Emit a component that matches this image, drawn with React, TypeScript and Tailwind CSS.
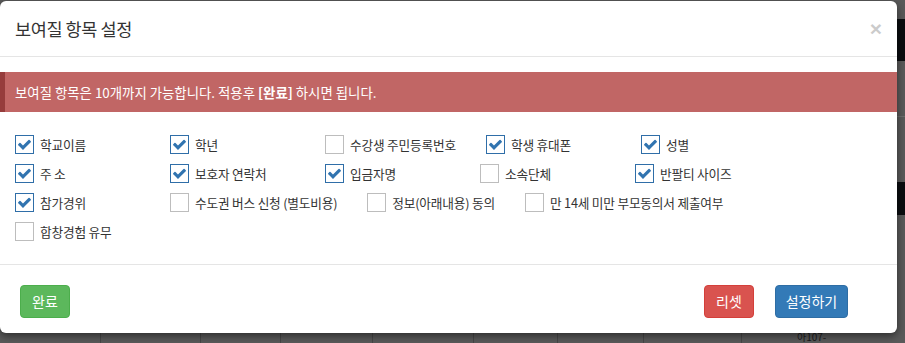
import React from "react";

const items: { label: string; checked: boolean }[] = [
  { label: "학교이름", checked: true },
  { label: "학년", checked: true },
  { label: "수강생 주민등록번호", checked: false },
  { label: "학생 휴대폰", checked: true },
  { label: "성별", checked: true },
  { label: "주 소", checked: true },
  { label: "보호자 연락처", checked: true },
  { label: "입금자명", checked: true },
  { label: "소속단체", checked: false },
  { label: "반팔티 사이즈", checked: true },
  { label: "참가경위", checked: true },
  { label: "수도권 버스 신청 (별도비용)", checked: false },
  { label: "정보(아래내용) 동의", checked: false },
  { label: "만 14세 미만 부모동의서 제출여부", checked: false },
  { label: "합창경험 유무", checked: false },
];

function Check() {
  return (
    <svg viewBox="0 0 1792 1792" className="w-[15px] h-[15px]" fill="#3174b0">
      <path d="M1671 566q0 40-28 68l-724 724-136 136q-28 28-68 28t-68-28l-136-136-362-362q-28-28-28-68t28-68l136-136q28-28 68-28t68 28l294 295 656-657q28-28 68-28t68 28l136 136q28 28 28 68z" />
    </svg>
  );
}

export default function App() {
  const font = { fontFamily: '"Noto Sans CJK KR", "Noto Sans", sans-serif' };
  return (
    <div className="relative w-[905px] h-[343px] overflow-hidden bg-[#5a5a5a]" style={font}>
      {/* background page hints */}
      <div className="absolute left-[897px] top-[19px] w-[8px] h-[42px] bg-[#0b0d10]" />
      <div className="absolute left-[897px] top-[116px] w-[8px] h-[1px] bg-[#6e6e6e]" />
      <div className="absolute left-[897px] top-[182px] w-[8px] h-[33px] bg-[#0b0d10]" />
      <div className="absolute left-[100px] top-[333px] w-[1px] h-[10px] bg-[#474747]" />
      <div className="absolute left-[200px] top-[333px] w-[1px] h-[10px] bg-[#474747]" />
      <div className="absolute left-[280px] top-[333px] w-[1px] h-[10px] bg-[#474747]" />
      <div className="absolute left-[372px] top-[333px] w-[1px] h-[10px] bg-[#474747]" />
      <div className="absolute left-[473px] top-[333px] w-[1px] h-[10px] bg-[#474747]" />
      <div className="absolute left-[557px] top-[333px] w-[1px] h-[10px] bg-[#474747]" />
      <div className="absolute left-[643px] top-[333px] w-[1px] h-[10px] bg-[#474747]" />
      <div className="absolute left-[741px] top-[333px] w-[1px] h-[10px] bg-[#474747]" />
      <div className="absolute left-[797px] top-[331px] text-[10px] leading-[11px] text-[#1a1a1a]">아107-</div>

      <div className="absolute left-0 top-[1px] w-[897px] h-[332px] bg-white rounded-[6px] shadow-[0_3px_9px_rgba(0,0,0,0.5)] flex flex-col">
        <div className="h-[56px] px-[15px] flex items-center justify-between border-b border-[#e5e5e5]">
          <div className="text-[17.5px] tracking-[-0.4px] text-[#333] leading-none">보여질 항목 설정</div>
          <div className="text-[21px] font-bold text-[#000] opacity-20 leading-none" style={{ fontFamily: '"Liberation Sans", Arial, sans-serif' }}>
            ×
          </div>
        </div>

        <div className="h-[207px] pt-[15px] flex flex-col">
          <div className="h-[40px] bg-[#c16665] border-l-[5px] border-[#963c3c] pl-[10px] flex items-center text-white text-[13.4px]">
            보여질 항목은 10개까지 가능합니다. 적용후&nbsp;<b>[완료]</b>&nbsp;하시면 됩니다.
          </div>
          <div className="mt-[23px] px-[15px] flex flex-wrap">
            {items.map((it) => (
              <div key={it.label} className="min-w-[125px] mr-[30px] mb-[10px] h-[19px] flex items-center">
                <div
                  className={
                    it.checked
                      ? "w-[19px] h-[19px] border-[1.5px] border-[#2f6ea8] flex items-center justify-center bg-white"
                      : "w-[19px] h-[19px] border border-[#bdbdbd] bg-white"
                  }
                >
                  {it.checked && <Check />}
                </div>
                <span className="ml-[6px] text-[12.7px] tracking-[-0.2px] text-[#333] whitespace-nowrap">{it.label}</span>
              </div>
            ))}
          </div>
        </div>

        <div className="border-t border-[#e5e5e5] pt-[20px] pl-[20px] pr-[49px] flex items-start justify-between">
          <button className="w-[50px] h-[33px] rounded-[4px] bg-[#5cb85c] border border-[#4cae4c] text-white text-[14px]">
            완료
          </button>
          <div className="flex gap-[21px]">
            <button className="w-[50px] h-[33px] rounded-[4px] bg-[#d9534f] border border-[#d43f3a] text-white text-[14px]">
              리셋
            </button>
            <button className="w-[73px] h-[33px] rounded-[4px] bg-[#337ab7] border border-[#2e6da4] text-white text-[14px]">
              설정하기
            </button>
          </div>
        </div>
      </div>
    </div>
  );
}
